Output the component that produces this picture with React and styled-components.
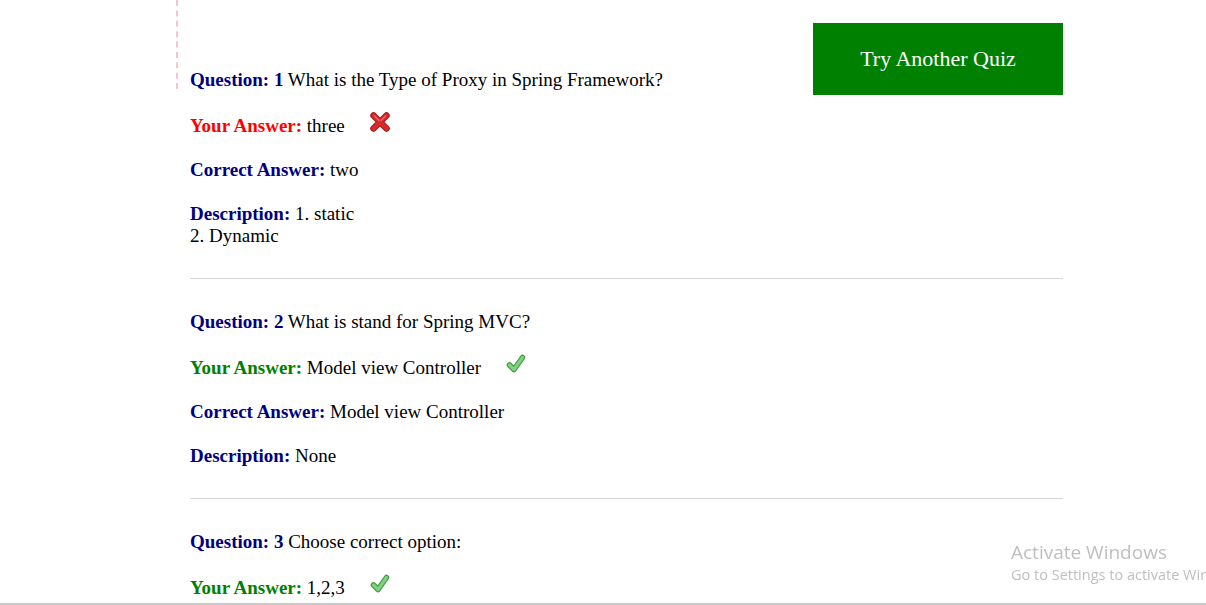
import React from 'react';
import styled, { createGlobalStyle } from 'styled-components';

const results = [
  {
    id: 1,
    question: 'What is the Type of Proxy in Spring Framework?',
    answer: 'three',
    correct: 'two',
    description: ['1. static', '2. Dynamic'],
  },
  {
    id: 2,
    question: 'What is stand for Spring MVC?',
    answer: 'Model view Controller',
    correct: 'Model view Controller',
    description: ['None'],
  },
  {
    id: 3,
    question: 'Choose correct option:',
    answer: '1,2,3',
    correct: '1,2,3',
    description: ['None'],
  },
];

const CrossIcon = () => (
  <Icon viewBox="0 0 20 20">
    <path d="M3.5 3.5 L16.5 16.5 M16.5 3.5 L3.5 16.5" stroke="#a8161b" strokeWidth="6.5" strokeLinecap="round" />
    <path d="M3.5 3.5 L16.5 16.5 M16.5 3.5 L3.5 16.5" stroke="#d82a2a" strokeWidth="4.5" strokeLinecap="round" />
    <path d="M4.5 4 L9 8.5 M15.5 4 L11 8.5" stroke="#ee6a6a" strokeWidth="1.3" strokeLinecap="round" />
  </Icon>
);

const CheckIcon = () => (
  <Icon viewBox="0 0 20 20">
    <path d="M3.5 11 L8 15.5 L16.5 3.5" fill="none" stroke="#3f9a3f" strokeWidth="5.5" strokeLinecap="round" strokeLinejoin="round" />
    <path d="M3.5 11 L8 15.5 L16.5 3.5" fill="none" stroke="#7fd07f" strokeWidth="3.2" strokeLinecap="round" strokeLinejoin="round" />
  </Icon>
);

const ResultBlock = ({ item, first }) => {
  const isRight = item.answer === item.correct;
  return (
    <Block>
      {!first && (
        <Line>
          <Label>Question: {item.id}</Label> {item.question}
        </Line>
      )}
      <Line>
        <Label $tone={isRight ? 'right' : 'wrong'}>Your Answer:</Label> {item.answer}
        {isRight ? <CheckIcon /> : <CrossIcon />}
      </Line>
      <Line>
        <Label>Correct Answer:</Label> {item.correct}
      </Line>
      <Line>
        <Label>Description:</Label> {item.description[0]}
        {item.description.slice(1).map((d, i) => (
          <React.Fragment key={i}>
            <br />
            {d}
          </React.Fragment>
        ))}
      </Line>
    </Block>
  );
};

const App = () => {
  return (
    <>
      <GlobalStyle />
      <Page>
        <Top>
          <Lead>
            <Line>
              <Label>Question: {results[0].id}</Label> {results[0].question}
            </Line>
          </Lead>
          <QuizButton>Try Another Quiz</QuizButton>
        </Top>
        <List>
          {results.map((item, index) => (
            <ResultBlock key={item.id} item={item} first={index === 0} />
          ))}
        </List>
      </Page>
      <Watermark>
        <WatermarkTitle>Activate Windows</WatermarkTitle>
        <WatermarkText>Go to Settings to activate Windows.</WatermarkText>
      </Watermark>
      <BottomEdge />
    </>
  );
};

// Styled Components
const GlobalStyle = createGlobalStyle`
  html, body {
    margin: 0;
    padding: 0;
    background: #ffffff;
    overflow: hidden;
  }
  body {
    font-family: "Liberation Serif", "Times New Roman", serif;
    font-size: 19px;
    color: #000000;
  }
`;

const Page = styled.div`
  margin-left: 176px;
  width: 887px;
`;

const Top = styled.div`
  display: flex;
  justify-content: space-between;
  align-items: flex-start;
`;

const Lead = styled.div`
  border-left: 2px dashed #f6c4d1;
  padding: 69px 0 0 12px;
  height: 20px;
  overflow: visible;
`;

const QuizButton = styled.button`
  margin-top: 23px;
  width: 250px;
  height: 72px;
  border: none;
  background: #008000;
  color: #ffffff;
  font-family: "Liberation Serif", "Times New Roman", serif;
  font-size: 22px;
  cursor: pointer;
`;

const List = styled.div`
  margin-left: 14px;
  padding-top: 18px;
`;

const Block = styled.div`
  padding-bottom: 31px;
  margin-bottom: 32px;
  border-bottom: 1px solid #d6d6d6;
`;

const Line = styled.p`
  margin: 0 0 22px;
  line-height: 22px;
  white-space: nowrap;

  &:last-child {
    margin-bottom: 0;
  }
`;

const Label = styled.b`
  color: ${({ $tone }) =>
    $tone === 'right' ? '#008000' : $tone === 'wrong' ? '#ff0000' : '#000080'};
`;

const Icon = styled.svg`
  width: 20px;
  height: 20px;
  margin: -1px 0 0 25px;
  vertical-align: 0px;
`;

const Watermark = styled.div`
  position: fixed;
  left: 1011px;
  top: 540px;
  font-family: "Open Sans", "Noto Sans", sans-serif;
  color: #bfbfbf;
  white-space: nowrap;
`;

const WatermarkTitle = styled.div`
  font-size: 19px;
  line-height: 25px;
`;

const WatermarkText = styled.div`
  font-size: 14.5px;
  line-height: 20px;
`;

const BottomEdge = styled.div`
  position: fixed;
  left: 0;
  right: 0;
  bottom: 0;
  height: 2px;
  background: #c8c8c8;
`;

export default App;
